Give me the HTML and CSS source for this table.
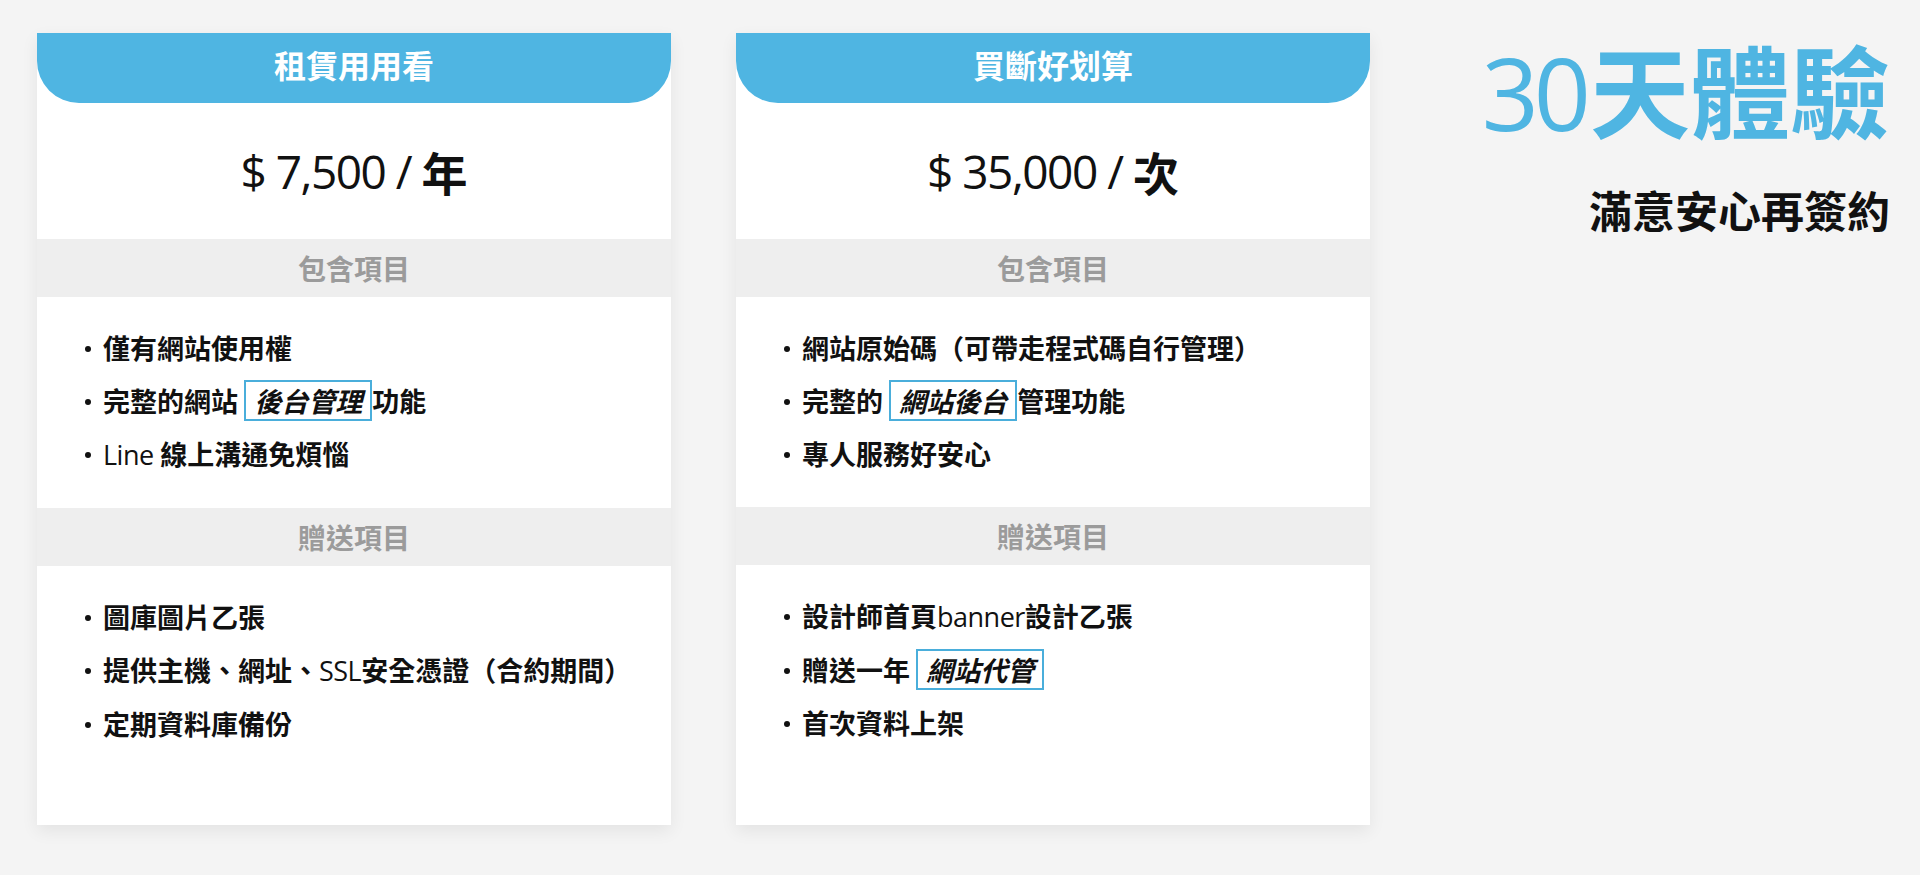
FILE: index.html
```html
<!DOCTYPE html>
<html lang="zh-Hant">
<head>
<meta charset="utf-8">
<title>方案</title>
<link rel="stylesheet" href="styles.css">
</head>
<body>
<div class="page">
  <section class="card">
    <div class="card-head">租賃用用看</div>
    <div class="price"><span class="lat">$ 7,500 / </span>年</div>
    <div class="band">包含項目</div>
    <ul class="list">
      <li>僅有網站使用權</li>
      <li>完整的網站 <span class="mark">後台管理</span>功能</li>
      <li><span class="lat">Line </span>線上溝通免煩惱</li>
    </ul>
    <div class="band">贈送項目</div>
    <ul class="list list-last">
      <li>圖庫圖片乙張</li>
      <li>提供主機、網址、<span class="lat">SSL</span>安全憑證（合約期間）</li>
      <li>定期資料庫備份</li>
    </ul>
  </section>
  <section class="card">
    <div class="card-head">買斷好划算</div>
    <div class="price"><span class="lat">$ 35,000 / </span>次</div>
    <div class="band">包含項目</div>
    <ul class="list">
      <li>網站原始碼（可帶走程式碼自行管理）</li>
      <li>完整的 <span class="mark">網站後台</span>管理功能</li>
      <li>專人服務好安心</li>
    </ul>
    <div class="band">贈送項目</div>
    <ul class="list list-last">
      <li>設計師首頁<span class="lat">banner</span>設計乙張</li>
      <li>贈送一年 <span class="mark">網站代管</span></li>
      <li>首次資料上架</li>
    </ul>
  </section>
  <aside class="promo">
    <h1 class="promo-title"><span class="lat num">30</span>天體驗</h1>
    <p class="promo-sub">滿意安心再簽約</p>
  </aside>
</div>
</body>
</html>
```
FILE: styles.css
```css
* { box-sizing: border-box; }
html, body { margin: 0; padding: 0; }
body {
  background: #f4f4f4;
  font-family: "Noto Sans CJK TC", "Noto Sans", sans-serif;
  font-weight: 700;
  color: #111;
  width: 1920px;
  height: 875px;
  overflow: hidden;
}
.lat {
  font-family: "Open Sans", "Noto Sans", sans-serif;
  font-weight: 300;
}
.page {
  display: flex;
  gap: 65px;
  padding: 33px 30px 0 37px;
}
.card {
  width: 634px;
  height: 792px;
  flex: none;
  background: #fff;
  display: flex;
  flex-direction: column;
  box-shadow: 0 6px 16px rgba(0, 0, 0, 0.07);
}
.card-head {
  height: 70px;
  background: #4fb5e2;
  color: #fff;
  font-size: 32px;
  line-height: 1;
  display: flex;
  align-items: center;
  justify-content: center;
  padding-bottom: 8px;
  border-radius: 0 0 42px 42px;
}
.price {
  height: 136px;
  display: flex;
  align-items: center;
  justify-content: center;
  font-size: 46px;
  line-height: 1;
  color: #111;
  white-space: pre;
}
.price .lat { font-weight: 400; letter-spacing: -1.5px; }
.band {
  height: 58px;
  background: #eeeeee;
  color: #9b9b9b;
  font-size: 28px;
  display: flex;
  align-items: center;
  justify-content: center;
}
.list {
  list-style: none;
  margin: 0;
  padding: 24px 0 27px 66px;
  font-size: 27px;
  line-height: 53px;
}
.list-last { flex: 1; }
.list li {
  position: relative;
  white-space: nowrap;
}
.list li::before {
  content: "";
  position: absolute;
  left: -18px;
  top: 25px;
  width: 6px;
  height: 6px;
  border-radius: 50%;
  background: #111;
}
.list .lat { font-weight: 400; letter-spacing: -0.5px; }
.mark {
  display: inline-block;
  border: 2px solid #4aaedb;
  padding: 0 8px;
  line-height: 37px;
  font-style: italic;
}
.promo {
  flex: 1;
  text-align: right;
}
.promo-title {
  margin: 0;
  padding-top: 5px;
  font-size: 100px;
  line-height: 1;
  font-weight: 700;
  color: #4fb5e2;
}
.promo-title .num { font-weight: 400; letter-spacing: -5px; margin-right: 4px; }
.promo-sub {
  margin: 46px 0 0;
  font-size: 43px;
  line-height: 1;
  color: #111;
  letter-spacing: 0;
}
```
